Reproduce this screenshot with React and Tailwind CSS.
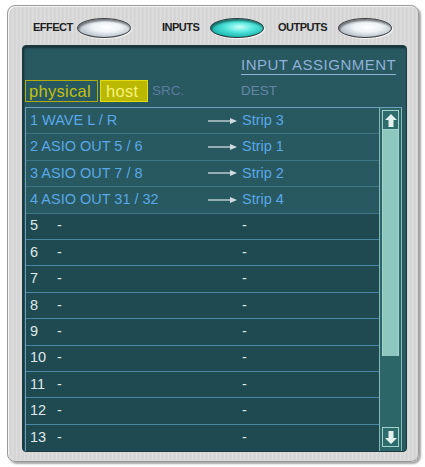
import React from "react";

const filled = [
  { label: "1 WAVE L / R", dest: "Strip 3" },
  { label: "2 ASIO OUT 5 / 6", dest: "Strip 1" },
  { label: "3 ASIO OUT 7 / 8", dest: "Strip 2" },
  { label: "4 ASIO OUT 31 / 32", dest: "Strip 4" },
];
const empty = ["5", "6", "7", "8", "9", "10", "11", "12", "13"];

function Oval({ active }) {
  return (
    <div
      className={
        active
          ? "w-[54px] h-[20px] rounded-[50%] border border-[#2a3a3c] bg-[radial-gradient(ellipse_at_55%_45%,#c8fffa_0%,#52e6dc_35%,#1fb8b0_70%,#0e6e6c_100%)] shadow-[inset_1px_2px_2px_rgba(0,0,0,0.45),1px_1px_1px_rgba(255,255,255,0.8)]"
          : "w-[54px] h-[20px] rounded-[50%] border border-[#3a3e42] bg-[radial-gradient(ellipse_at_55%_45%,#ffffff_0%,#eef3f6_35%,#b8c0c8_72%,#6a7076_100%)] shadow-[inset_1px_2px_2px_rgba(0,0,0,0.45),1px_1px_1px_rgba(255,255,255,0.8)]"
      }
    />
  );
}

function Arrow() {
  return (
    <svg width="29" height="8" viewBox="0 0 29 8">
      <line x1="0" y1="4" x2="23" y2="4" stroke="#cfdbe2" strokeWidth="1.3" />
      <polygon points="22,1 29,4 22,7" fill="#cfdbe2" />
    </svg>
  );
}

function ScrollArrow({ down }) {
  return (
    <div className="mx-[2px] h-[20px] border border-[#a6d2cc] bg-[#2f6c6d] flex items-center justify-center">
      <svg width="12" height="13" viewBox="0 0 12 13" className={down ? "rotate-180" : ""}>
        <polygon points="6,0 12,6 8.5,6 8.5,13 3.5,13 3.5,6 0,6" fill="#e2f0ee" />
      </svg>
    </div>
  );
}

export default function App() {
  return (
    <div className="w-[425px] h-[467px] bg-white pt-[5px] pl-[7px]" style={{ fontFamily: '"Liberation Sans", Arial, sans-serif' }}>
      <div className="w-[412px] h-[457px] rounded-[8px] border border-[#9a9a9a] bg-[repeating-linear-gradient(90deg,#d6d6d6_0px,#e4e4e4_1px,#cdcdcd_2px,#dcdcdc_3px,#d0d0d0_4px)] shadow-[2px_2px_2px_rgba(0,0,0,0.35),inset_1px_1px_0_#f4f4f4] flex flex-col">
        {/* header */}
        <div className="h-[39px] pt-[4px] flex items-center pl-[25px] text-[#1e1e1e] font-bold text-[11px] tracking-[-0.5px]">
          <span className="w-[44px]">EFFECT</span>
          <Oval />
          <span className="ml-[31px] w-[48px]">INPUTS</span>
          <Oval active />
          <span className="ml-[14px] w-[60px]">OUTPUTS</span>
          <Oval />
        </div>
        {/* screen */}
        <div className="ml-[14px] w-[385px] h-[407px] rounded-[4px] bg-[#285860] border border-[#1a3b40] shadow-[inset_1px_2px_2px_rgba(0,0,0,0.45)] flex flex-col">
          <div className="h-[31px] flex items-end pl-[218px]">
            <span className="text-[15px] leading-[16px] text-[#8fb2d6] border-b border-[#8fb2d6] tracking-[0.5px] pb-[1px]">
              INPUT ASSIGNMENT
            </span>
          </div>
          <div className="mt-[5px] h-[22px] flex items-center pl-[2px]">
            <div className="h-[22px] w-[73px] border border-[#aeac10] text-[#c2c010] text-[16.5px] leading-[20px] pl-[3px] tracking-[0.3px]">physical</div>
            <div className="ml-[2px] h-[22px] w-[48px] border border-[#e2de10] bg-[#bbb800] text-[#f6f27a] text-[16.5px] leading-[20px] pl-[5px] tracking-[0.3px]">host</div>
            <span className="ml-[4px] text-[13.5px] text-[#5b7ea0] w-[89px]">SRC.</span>
            <span className="text-[13.5px] text-[#6586a6]">DEST</span>
          </div>
          <div className="mt-[5px] ml-[2px] w-[377px] h-[344px] flex border-t border-l border-[#6f9fbf]">
            <div className="flex-1 flex flex-col">
              {filled.map((r) => (
                <div key={r.label} className="h-[26.5px] flex items-center border-b border-[#3e7686] pl-[4px] text-[14.5px] text-[#5aa8e6]">
                  <span className="w-[178px]">{r.label}</span>
                  <span className="w-[34px] flex items-center"><Arrow /></span>
                  <span>{r.dest}</span>
                </div>
              ))}
              {empty.map((n, i) => (
                <div key={n} className={"h-[26.5px] flex items-center bg-[#1f4a51] pl-[4px] text-[14.5px] text-[#dfe8e8] " + (i < 8 ? "border-b border-[#4e86a8]" : "")}>
                  <span className="w-[27px]">{n}</span>
                  <span className="w-[185px]">-</span>
                  <span>-</span>
                </div>
              ))}
            </div>
            <div className="w-[23px] border-l border-r border-[#84b8b4] bg-[#2c6668] flex flex-col pt-[2px] pb-[4px]">
              <ScrollArrow />
              <div className="mx-[2px] h-[226px] bg-[#8ec6c0] border-x border-[#a6d2cc]" />
              <div className="flex-1" />
              <ScrollArrow down />
            </div>
          </div>
        </div>
      </div>
    </div>
  );
}
